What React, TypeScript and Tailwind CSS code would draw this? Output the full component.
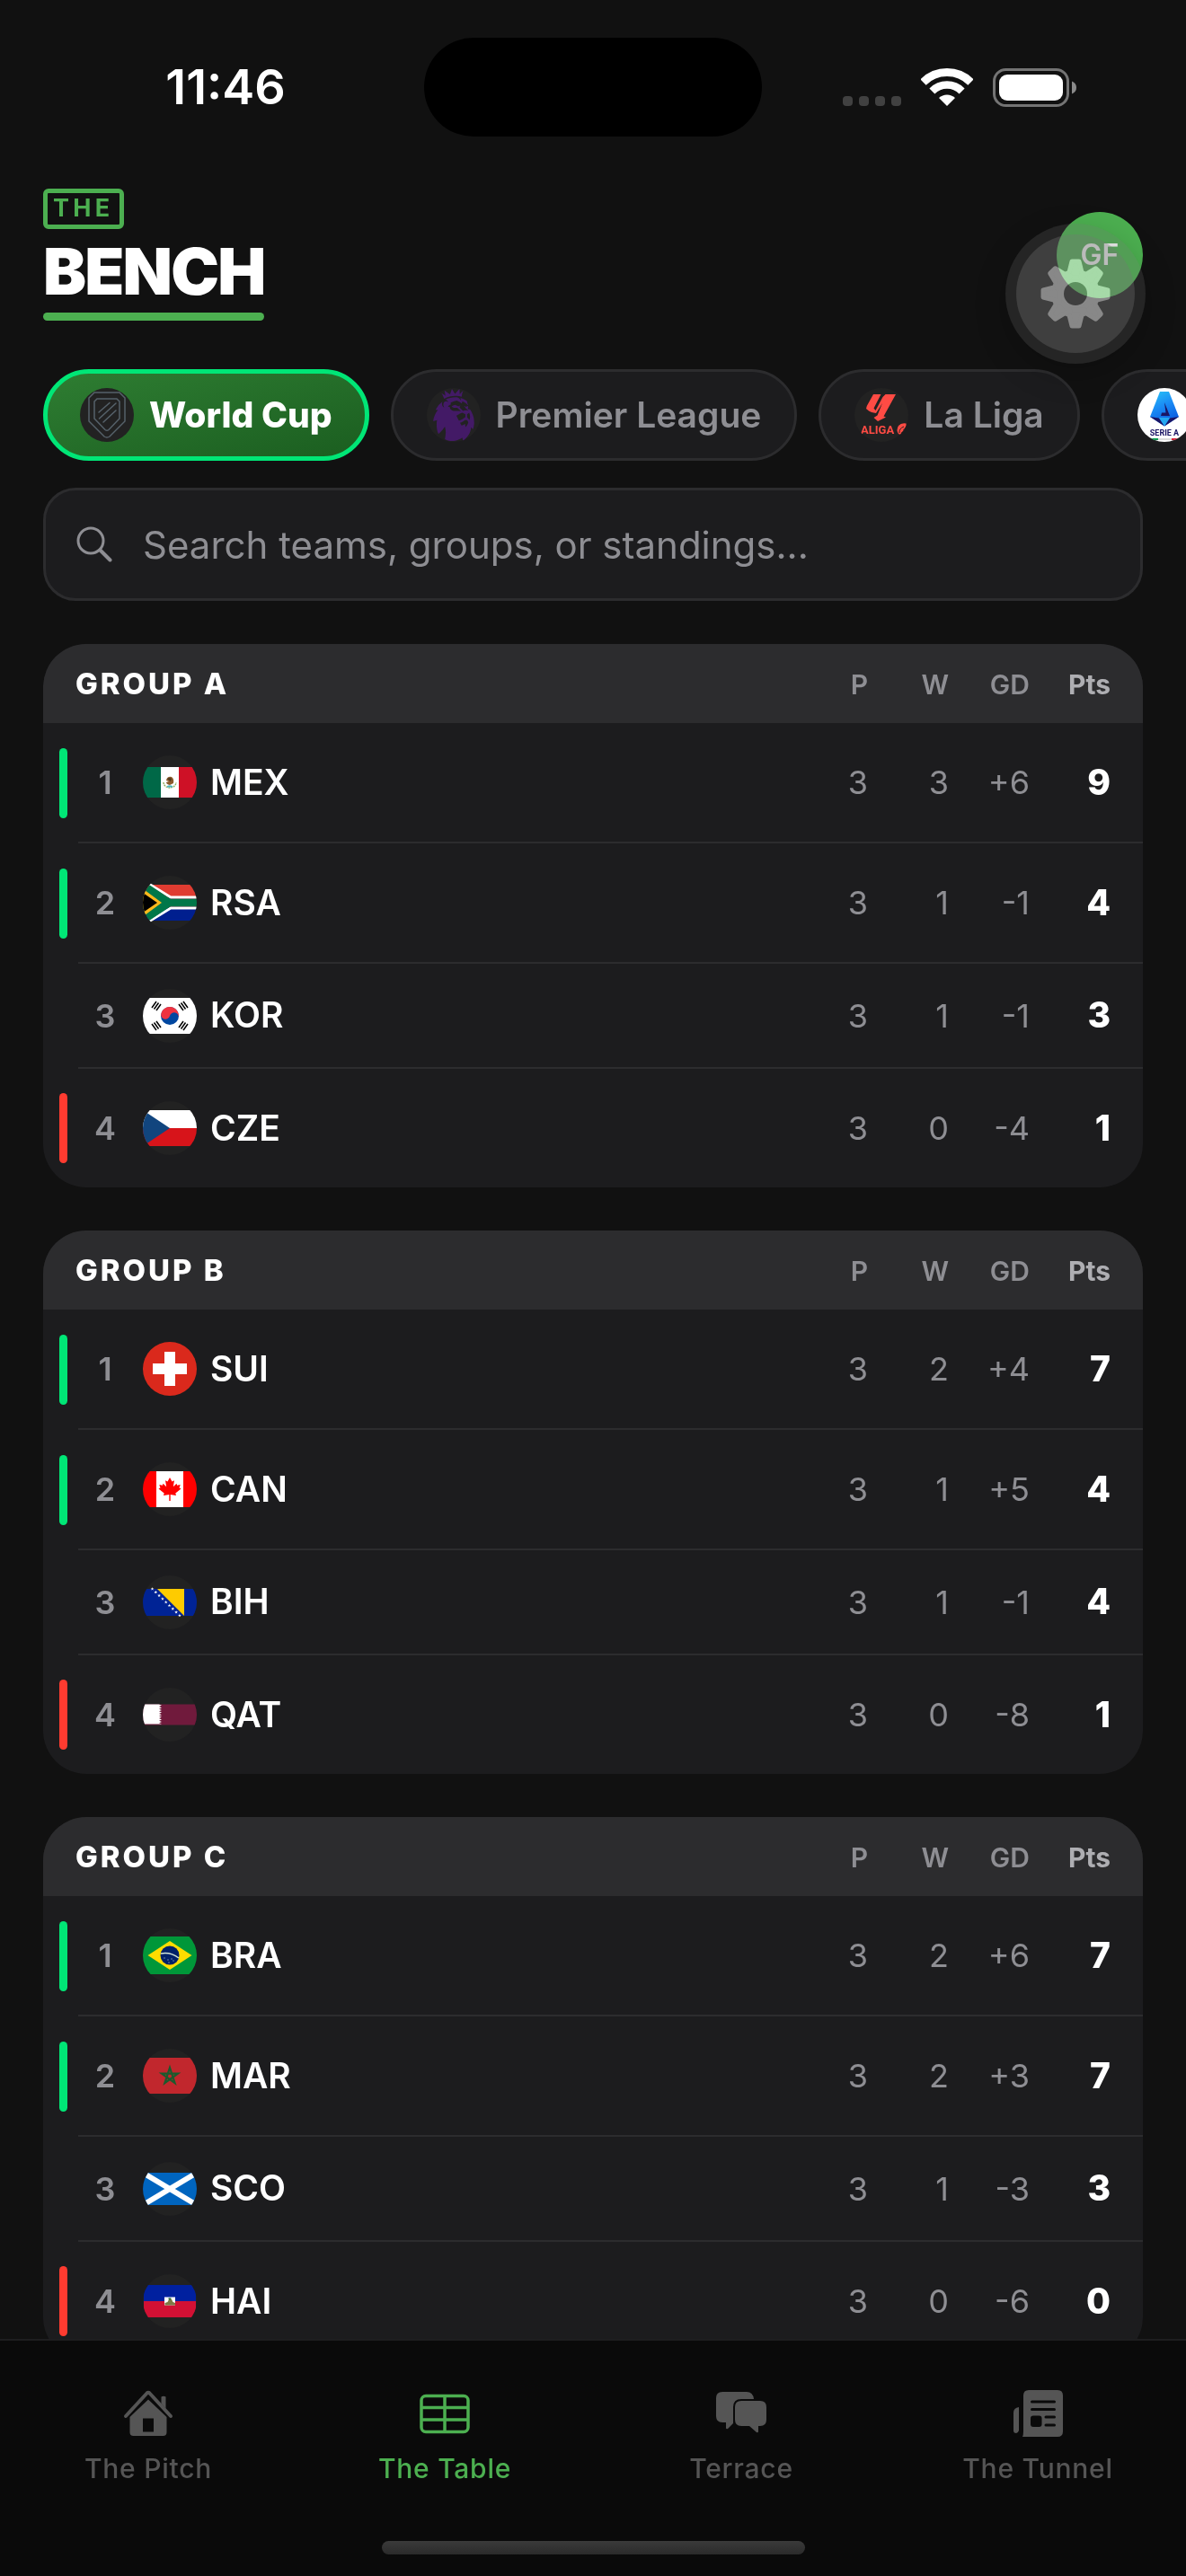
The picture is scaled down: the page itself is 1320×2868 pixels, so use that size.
import type { ReactNode } from 'react'
import clsx from 'clsx'
import { SiPremierleague } from 'react-icons/si'

type Team = {
  code: string
  played: number
  won: number
  diff: string
  points: number
}

const GROUPS: { name: string; teams: Team[] }[] = [
  {
    name: 'GROUP A',
    teams: [
      { code: 'MEX', played: 3, won: 3, diff: '+6', points: 9 },
      { code: 'RSA', played: 3, won: 1, diff: '-1', points: 4 },
      { code: 'KOR', played: 3, won: 1, diff: '-1', points: 3 },
      { code: 'CZE', played: 3, won: 0, diff: '-4', points: 1 },
    ],
  },
  {
    name: 'GROUP B',
    teams: [
      { code: 'SUI', played: 3, won: 2, diff: '+4', points: 7 },
      { code: 'CAN', played: 3, won: 1, diff: '+5', points: 4 },
      { code: 'BIH', played: 3, won: 1, diff: '-1', points: 4 },
      { code: 'QAT', played: 3, won: 0, diff: '-8', points: 1 },
    ],
  },
  {
    name: 'GROUP C',
    teams: [
      { code: 'BRA', played: 3, won: 2, diff: '+6', points: 7 },
      { code: 'MAR', played: 3, won: 2, diff: '+3', points: 7 },
      { code: 'SCO', played: 3, won: 1, diff: '-3', points: 3 },
      { code: 'HAI', played: 3, won: 0, diff: '-6', points: 0 },
    ],
  },
]

const STAR = '0,-1 .225,-.309 .951,-.309 .363,.118 .588,.809 0,.382 -.588,.809 -.363,.118 -.951,-.309 -.225,-.309'

// Every flag is drawn on a 60x60 canvas, letterboxed at its own ratio
const FLAGS: Record<string, ReactNode> = {
  MEX: (
    <>
      <path d="M0 13h20v34H0z" fill="#006847" />
      <path d="M20 13h20v34H20z" fill="#fff" />
      <path d="M40 13h20v34H40z" fill="#ce1126" />
      <path d="M23 30a7 6 0 0 0 14 0" fill="none" stroke="#8fae5d" strokeWidth="1.4" strokeDasharray="2 .8" />
      <path d="M26 28q1-5 6-4q3 2 2 7l-4 2q-4-1-4-3l3-1z" fill="#8c5a2b" />
      <path d="M27 26q3-2 5 0l-1 3z" fill="#4d3a1e" />
      <path d="M27 34q3-1.500 6 0v1.500h-6z" fill="#4bb5c1" />
    </>
  ),
  RSA: (
    <>
      <path d="M0 10h60v14H0z" fill="#e03c31" />
      <path d="M0 36h60v14H0z" fill="#001f8f" />
      <path d="M5 8L31 24H60M5 52L31 36H60" fill="none" stroke="#fff" strokeWidth="3" />
      <path d="M0 10H7L31 26H60V34H31L7 50H0z" fill="#007749" />
      <path d="M0 14.500L21 30L0 45.500z" fill="#ffb81c" />
      <path d="M0 19L16 30L0 41z" fill="#000" />
    </>
  ),
  KOR: (
    <>
      <path d="M0 10h60v40H0z" fill="#fff" />
      <circle cx="30" cy="30" r="10" fill="#0047a0" />
      <path d="M20 30a10 10 0 0 1 20 0a5 5 0 0 0-10 0a5 5 0 0 1-10 0" fill="#ef3340" transform="rotate(15 30 30)" />
      <g stroke="#000" strokeWidth="1.500">
        <path d="M10 21l5-7M12.500 22.500l5-7M15 24l5-7" />
        <path d="M40 17l5 7M42.500 15.500l5 7M45 14l5 7" />
        <path d="M10 39l5 7M12.500 37.500l5 7M15 36l5 7" />
        <path d="M40 43l5-7M42.500 44.500l5-7M45 46l5-7" />
      </g>
    </>
  ),
  CZE: (
    <>
      <path d="M0 10h60v20H0z" fill="#fff" />
      <path d="M0 30h60v20H0z" fill="#d7141a" />
      <path d="M0 10l30 20L0 50z" fill="#11457e" />
    </>
  ),
  SUI: (
    <>
      <path d="M0 0h60v60H0z" fill="#da291c" />
      <path d="M24 11h12v13h13v12H36v13H24V36H11V24h13z" fill="#fff" />
    </>
  ),
  CAN: (
    <>
      <path d="M0 10h60v40H0z" fill="#f00" />
      <path d="M15 10h30v40H15z" fill="#fff" />
      <path
        d="M30 17l2.500 4.500 2.500-1.200-1.200 7 3.700-3.600.6 2 3.600-.7-1.200 3.600 2 1-6.200 5 .7 2.300-6.300-1V43h-1.400v-7.100l-6.300 1 .7-2.300-6.200-5 2-1-1.200-3.600 3.600.7.6-2 3.700 3.600-1.200-7 2.500 1.200z"
        fill="#f00"
      />
    </>
  ),
  BIH: (
    <>
      <path d="M0 15h60v30H0z" fill="#002395" />
      <path d="M16 15h30v30z" fill="#fecb00" />
      <g fill="#fff">
        {[0, 1, 2, 3, 4, 5, 6, 7, 8].map((i) => (
          <polygon key={i} points={STAR} transform={`translate(${10.5 + i * 3.8} ${15 + i * 3.7}) scale(2)`} />
        ))}
      </g>
    </>
  ),
  QAT: (
    <>
      <path d="M0 18.500h60v23H0z" fill="#701a3c" />
      <path
        d="M0 18.500h18l3 1.300-3 1.300 3 1.300-3 1.300 3 1.300-3 1.300 3 1.300-3 1.300 3 1.300-3 1.300 3 1.300-3 1.300 3 1.300-3 1.300 3 1.300-3 1.300 3 1.200H0z"
        fill="#fff"
      />
    </>
  ),
  BRA: (
    <>
      <path d="M0 9h60v42H0z" fill="#009739" />
      <path d="M5.500 30L30 14l24.500 16L30 46z" fill="#fedd00" />
      <circle cx="30" cy="30" r="10.500" fill="#012169" />
      <path d="M20 28q11-2 20 5" fill="none" stroke="#d5e6d8" strokeWidth="1.500" />
      <path d="M23 33h2m2 2h2m2-1h2m-5 4h2m3-2h2" stroke="#8796b8" strokeWidth=".8" />
    </>
  ),
  MAR: (
    <>
      <path d="M0 10h60v40H0z" fill="#c1272d" />
      <path d="M30 21l5.600 17.200L21 27.600h18L24.400 38.200z" fill="none" stroke="#1b5a2d" strokeWidth="2.200" />
    </>
  ),
  SCO: (
    <>
      <path d="M0 12h60v36H0z" fill="#0065bf" />
      <path d="M0 12l60 36M0 48l60-36" stroke="#fff" strokeWidth="6" />
    </>
  ),
  HAI: (
    <>
      <path d="M1 12h58v18H1z" fill="#00209f" />
      <path d="M1 30h58v18H1z" fill="#d21034" />
      <path d="M24 25.500h12v9H24z" fill="#fff" />
      <path d="M24.500 34.500v-2.500l3-1 1.500-3h3l1.500 3 2.500 1v2.500z" fill="#7d7a45" />
      <path d="M28 27q2-1.500 4 0l-2 2z" fill="#2f6b3b" />
    </>
  ),
}

function Flag({ code }: { code: string }) {
  return (
    <svg viewBox="0 0 60 60" className="size-15 shrink-0 overflow-hidden rounded-full bg-[#222222]" aria-hidden="true">
      {FLAGS[code]}
    </svg>
  )
}

function WorldCupLogo() {
  return (
    <svg viewBox="0 0 60 60" className="size-15 rounded-full bg-[#222222]" fill="none" stroke="#56626b" strokeWidth="1.500" aria-hidden="true">
      <path d="M16 5h28l6 6v26L33 54q-3 2-6 0L10 37V11z" />
      <path d="M19 12h22l3 3v19L32 46.500q-2 1.500-4 0L16 34V15z" />
      <path d="M21 27l12-10.500M21.500 34L40 17M26 38l14-13" strokeLinecap="round" />
    </svg>
  )
}

function PremierLeagueLogo() {
  return (
    <span className="flex size-15 items-center justify-center rounded-full bg-[#222222]">
      <SiPremierleague className="size-[58px] text-[#431a66]" aria-hidden="true" />
    </span>
  )
}

function LaLigaLogo() {
  return (
    <svg viewBox="0 0 60 60" className="size-15 overflow-hidden rounded-full bg-[#222222]" aria-hidden="true">
      <g fill="#ff4b44">
        <path d="M21 7h8.500L21.500 22.500l2 2.500L31.500 10l3-3H46L32.500 31.500l2.500 1L26 37l-4.500-4 4-2.500L31 17l-7 11-5-1-3-1.500-3-2.500.8-3z" />
        <text x="7" y="51" className="font-['Roboto'] text-[13px] font-bold">
          ALIGA
        </text>
        <path d="M49 42q3-3.500 8.500-2.500q1 7-3 11q-3 2-5.500.5q-3-4 0-9z" />
      </g>
      <path d="M50 50q-.5-5 5-7M52 50q3-1 3.500-5" fill="none" stroke="#222" strokeWidth="1" />
    </svg>
  )
}

function SerieALogo() {
  return (
    <svg viewBox="0 0 60 60" className="size-15 overflow-hidden rounded-full bg-white" aria-hidden="true">
      <defs>
        <linearGradient id="serie-a" x1="0" y1="0" x2="0.4" y2="1">
          <stop offset="0" stopColor="#29c5f6" />
          <stop offset="0.5" stopColor="#1a8cf5" />
          <stop offset="1" stopColor="#0a5be0" />
        </linearGradient>
      </defs>
      <path d="M25 4h10l11 28-16 10.500L14 32z" fill="url(#serie-a)" />
      <path d="M14 32l10 1.500 6 9zM46 32l-10 1.500-6 9z" fill="#1a1464" />
      <path d="M24 33h12l-6 9.500z" fill="#25a7f0" />
      <path d="M30 16l6 15H26l1-3.500h4.500z" fill="#1a1464" />
      <text x="30" y="53" textAnchor="middle" fill="#1a1464" className="font-['Roboto'] text-[9px] font-bold">
        SERIE A
      </text>
      <path d="M14 56h9v2h-9z" fill="#009a4e" />
      <path d="M23 56h15v2H23z" fill="#dddddd" />
      <path d="M38 56h8v2h-8z" fill="#d8203a" />
    </svg>
  )
}

function StatusBar() {
  return (
    <div className="grid h-38 grid-cols-[1fr_376px_1fr] items-center pt-[42px]">
      <div className="pl-[30px] text-center text-[54px] leading-none font-semibold">11:46</div>
      <div className="h-[110px] rounded-full bg-black" />
      <div className="flex items-center justify-center pr-8">
        <div className="mr-[22px] flex gap-[7px] self-end pb-px">
          {[0, 1, 2, 3].map((dot) => (
            <span key={dot} className="h-[11px] w-[11px] rounded-[4px] bg-[#414141]" />
          ))}
        </div>
        <svg viewBox="0 0 58 42" className="mr-[22px] h-[42px] w-[58px]" fill="none" stroke="#fff" aria-hidden="true">
          <path d="M2.500 15.500a37.500 37.500 0 0 1 53 0" strokeWidth="9" />
          <path d="M12.400 25.400a23.500 23.500 0 0 1 33.200 0" strokeWidth="8.500" />
          <path d="M29 42l-9-9a13 13 0 0 1 18 0z" fill="#fff" stroke="none" />
        </svg>
        <svg viewBox="0 0 94 43" className="h-[43px] w-[94px]" aria-hidden="true">
          <rect x="1.500" y="1.500" width="82" height="40" rx="13" fill="none" stroke="#747474" strokeWidth="3" />
          <rect x="7" y="7" width="71" height="29" rx="9" fill="#fff" />
          <path d="M88 14.500q5 2 5 7t-5 7z" fill="#8a8a8a" />
        </svg>
      </div>
    </div>
  )
}

function Gear() {
  const teeth = [0, 45, 90, 135, 180, 225, 270, 315]

  return (
    <svg viewBox="0 0 78 78" className="size-[78px] mix-blend-plus-lighter" aria-hidden="true">
      <mask id="gear-hole">
        <rect width="78" height="78" fill="#fff" />
        <circle cx="39" cy="39" r="13" fill="#000" />
      </mask>
      <g mask="url(#gear-hole)" fill="#494949" stroke="#494949" strokeLinejoin="round">
        <circle cx="39" cy="39" r="27" stroke="none" />
        {teeth.map((angle) => (
          <path key={angle} d="M35 3h8l3 12 3 6H29l3-6z" strokeWidth="5" transform={`rotate(${angle} 39 39)`} />
        ))}
      </g>
    </svg>
  )
}

function Header() {
  return (
    <header className="flex items-center justify-between px-12 pt-[58px]">
      <h1 className="flex flex-col items-start">
        <span className="flex h-[45px] items-center rounded-md border-[5px] border-[#4caf50] px-1.5 pb-[3px] text-[27px] leading-none font-bold tracking-[0.16em] text-[#4caf50]">
          THE
        </span>
        <span className="mt-[11px] text-[72px] leading-none font-black tracking-tight">BENCH</span>
        <span className="mt-[10px] h-[9px] w-full rounded-full bg-[#4caf50]" />
      </h1>
      <div className="relative">
        <div className="flex size-24 items-center justify-center rounded-full bg-[#4caf50] text-[32px] font-semibold">GF</div>
        <button
          type="button"
          aria-label="Settings"
          className="absolute top-[13px] -left-[57px] flex size-39 items-center justify-center rounded-full bg-[rgba(103,103,103,0.23)] shadow-[0_12px_36px_rgba(0,0,0,0.2)]"
        >
          <span className="flex size-33 items-center justify-center rounded-full bg-[rgba(118,118,118,0.32)]">
            <Gear />
          </span>
        </button>
      </div>
    </header>
  )
}

const LEAGUES = [
  { name: 'World Cup', logo: <WorldCupLogo />, active: true },
  { name: 'Premier League', logo: <PremierLeagueLogo />, active: false },
  { name: 'La Liga', logo: <LaLigaLogo />, active: false },
  { name: 'Serie A', logo: <SerieALogo />, active: false },
]

function LeagueTabs() {
  return (
    <div className="mt-[54px] flex gap-6 overflow-x-auto px-12 [scrollbar-width:none]">
      {LEAGUES.map((league) => (
        <button
          key={league.name}
          type="button"
          aria-pressed={league.active}
          className={clsx(
            'flex h-[102px] shrink-0 items-center gap-[17px] rounded-full text-[39px]',
            league.active
              ? 'border-5 border-[#00e676] bg-linear-to-br from-[#2e7d32] to-[#1b5e20] px-9 font-extrabold text-white'
              : 'border-3 border-[#2c2c2e] bg-[#1c1c1e] px-[37px] font-semibold text-[#8e8e93]',
          )}
        >
          {league.logo}
          {league.name}
        </button>
      ))}
    </div>
  )
}

function SearchBox() {
  return (
    <label className="mx-12 mt-[30px] flex h-[126px] items-center gap-[34px] rounded-[36px] border-3 border-[#2c2c2e] bg-[#1c1c1e] px-[34px]">
      <svg viewBox="0 0 40 40" className="size-10 shrink-0" fill="none" stroke="#8e8e93" aria-hidden="true">
        <circle cx="16" cy="16" r="14" strokeWidth="3" />
        <path d="M27 27l10.500 10.500" strokeWidth="4" strokeLinecap="round" />
      </svg>
      <input
        type="search"
        aria-label="Search"
        placeholder="Search teams, groups, or standings..."
        className="min-w-0 flex-1 bg-transparent text-[42px] outline-none placeholder:text-[#8e8e93]"
      />
    </label>
  )
}

function GroupTable({ name, teams }: { name: string; teams: Team[] }) {
  return (
    <section className="overflow-hidden rounded-[48px] bg-[#1c1c1e]">
      <table className="w-full table-fixed border-separate border-spacing-0 text-right">
        <colgroup>
          <col className="w-[39px]" />
          <col className="w-15" />
          <col />
          <col className="w-[90px]" />
          <col className="w-[90px]" />
          <col className="w-[90px]" />
          <col className="w-[126px]" />
        </colgroup>
        <thead>
          <tr className="h-22 bg-[#2c2c2e] text-[30px] text-[#8e8e93] [&>th]:pt-0.5">
            <th colSpan={3} scope="colgroup" className="pl-9 text-left text-[33px] font-extrabold tracking-[0.09em] text-white">
              {name}
            </th>
            <th scope="col" className="font-semibold">P</th>
            <th scope="col" className="font-semibold">W</th>
            <th scope="col" className="font-semibold">GD</th>
            <th scope="col" className="pr-9 font-bold text-[#aeaeb2]">Pts</th>
          </tr>
        </thead>
        <tbody>
          {teams.map((team, index) => {
            const qualified = index < 2
            const last = index === teams.length - 1

            return (
              <tr
                key={team.code}
                className={clsx(
                  'text-[36px] text-[#8e8e93] [&>td]:p-0',
                  !last && '[&>td+td]:border-b-2 [&>td+td]:border-[#2c2c2e]',
                  last ? 'h-[132px]' : qualified ? 'h-[134px]' : 'h-[117px]',
                )}
              >
                <td>
                  {(qualified || last) && (
                    <div className={clsx('ml-[18px] h-[78px] w-[9px] rounded-full', qualified ? 'bg-[#00e676]' : 'bg-[#ff3b30]')} />
                  )}
                </td>
                <td className="text-center font-semibold">{index + 1}</td>
                <td>
                  <div className="flex items-center gap-[15px] pl-3 text-[39px] font-semibold text-white">
                    <Flag code={team.code} />
                    {team.code}
                  </div>
                </td>
                <td>{team.played}</td>
                <td>{team.won}</td>
                <td>{team.diff}</td>
                <td className="pr-9! text-[39px] font-extrabold text-white">{team.points}</td>
              </tr>
            )
          })}
        </tbody>
      </table>
    </section>
  )
}

const HomeIcon = (
  <>
    <path d="M4 30L27.500 4.500Q29 3 30.500 4.500L54 30" fill="none" stroke="currentColor" strokeWidth="4" strokeLinecap="round" strokeLinejoin="round" />
    <path d="M43.500 8.500q2.500-1.500 5 0v13l-5-5.500z" />
    <path fillRule="evenodd" d="M29 11.500L49.500 31v17q0 4-4 4h-33q-4 0-4-4V31zM23 32.500v15h12v-15z" />
  </>
)

const TableIcon = (
  <g fill="none" stroke="currentColor" strokeWidth="3.500">
    <rect x="3" y="7.500" width="52" height="40" rx="5" />
    <path d="M3 20.500h52M3 34h52M29 7v41" />
  </g>
)

const ChatIcon = (
  <>
    <path d="M8 3h27q7 0 8 8H29q-9 0-9 9v18l-6 6q-2 1-2-1v-6H8q-7 0-7-7V10q0-7 7-7z" />
    <path d="M29 13h21q7 0 7 7v14q0 7-7 7h-2v6q0 2-2 1l-8-7h-9q-7 0-7-7V20q0-7 7-7z" />
  </>
)

const NewsIcon = (
  <>
    <path d="M2 26q0-5 6-6v26q-1 3-3 3-3 0-3-3z" />
    <path d="M19 1h32q6 0 6 6v40q0 6-6 6H12q1-2 1-6V7q0-6 6-6z" />
    <g stroke="#0a0a0a" strokeWidth="3" strokeLinecap="round">
      <path d="M22.500 14h25M22.500 22.500h25M38 31h9.500M38 40h9.500" />
    </g>
    <rect x="21" y="29.500" width="12.500" height="12.500" rx="3" fill="#0a0a0a" />
  </>
)

const TABS = [
  { label: 'The Pitch', icon: HomeIcon, active: false },
  { label: 'The Table', icon: TableIcon, active: true },
  { label: 'Terrace', icon: ChatIcon, active: false },
  { label: 'The Tunnel', icon: NewsIcon, active: false },
]

function BottomNav() {
  return (
    <nav className="shrink-0 border-t-2 border-[#1e1e20] bg-[#0a0a0a] pb-6">
      <ul className="grid h-[223px] grid-cols-4 pt-[54px]">
        {TABS.map((tab) => (
          <li key={tab.label}>
            <a
              href="#"
              aria-current={tab.active ? 'page' : undefined}
              className={clsx('flex flex-col items-center gap-4 text-[30px] leading-9 font-medium tracking-wide', tab.active ? 'text-[#4caf50]' : 'text-[#555555]')}
            >
              <svg viewBox="0 0 58 54" className="h-[54px] w-[58px]" fill="currentColor" aria-hidden="true">
                {tab.icon}
              </svg>
              {tab.label}
            </a>
          </li>
        ))}
      </ul>
      <div className="mx-auto h-[15px] w-[471px] rounded-full bg-linear-to-b from-[#3a3a3a] to-[#2b2b2b]" />
    </nav>
  )
}

export default function App() {
  return (
    <div className="flex h-screen flex-col overflow-hidden bg-[#111111] font-['Inter',sans-serif] text-white">
      <StatusBar />
      <Header />
      <LeagueTabs />
      <SearchBox />
      <main className="mt-12 flex min-h-0 flex-1 flex-col gap-12 overflow-y-auto px-12 [scrollbar-width:none] *:shrink-0">
        {GROUPS.map((group) => (
          <GroupTable key={group.name} name={group.name} teams={group.teams} />
        ))}
      </main>
      <BottomNav />
    </div>
  )
}
